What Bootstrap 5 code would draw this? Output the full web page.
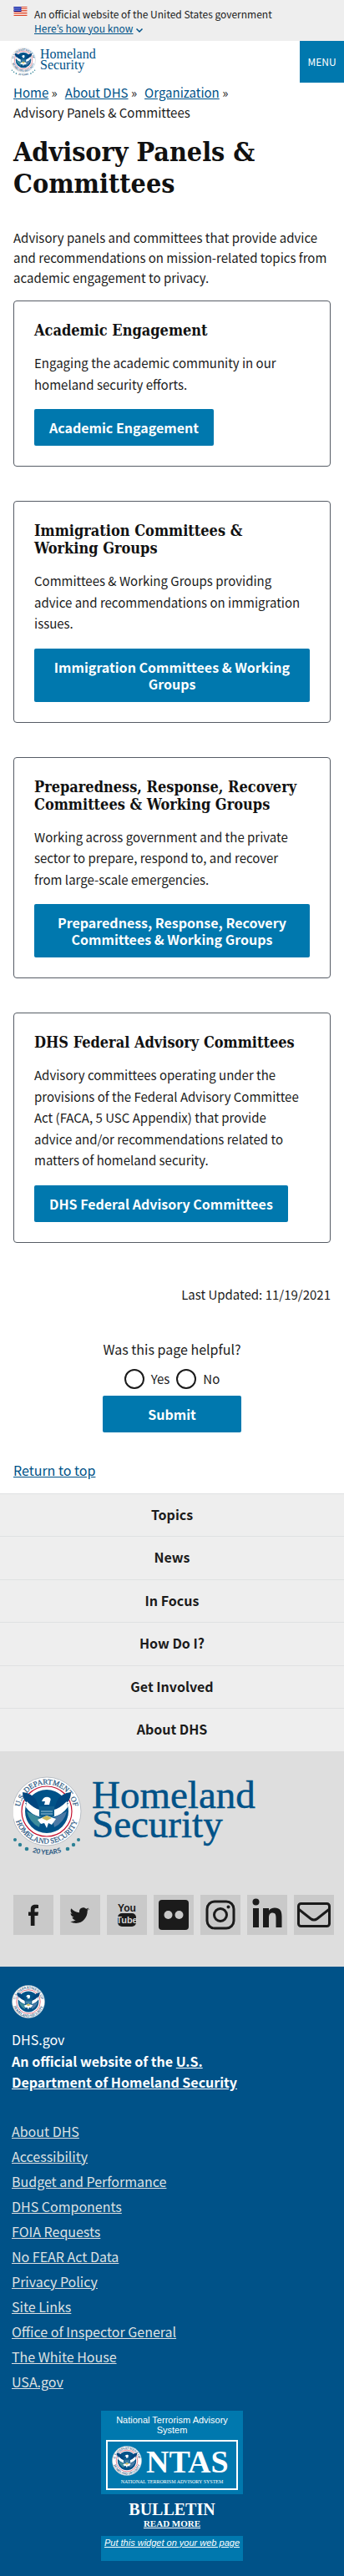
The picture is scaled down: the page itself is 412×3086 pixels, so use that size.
<!DOCTYPE html>
<html lang="en">
<head>
<meta charset="utf-8">
<meta name="viewport" content="width=device-width, initial-scale=1">
<title>Advisory Panels &amp; Committees | Homeland Security</title>
<link href="https://cdn.jsdelivr.net/npm/bootstrap@5.3.0/dist/css/bootstrap.min.css" rel="stylesheet">
<style>
  :root { --dhs-blue: #0078ae; --dhs-navy: #005288; }
  body { font-family: "Noto Sans CJK JP", "Noto Sans", sans-serif; font-size: 15px; line-height: 24px; color: #1b1b1b; }
  a { color: var(--dhs-navy); }
  h1, h2 { font-family: "DejaVu Serif Condensed", "DejaVu Serif", serif; font-weight: 700; color: #111; }
  h1 { font-size: 32px; line-height: 38px; }
  h2 { font-size: 18px; line-height: 21px; }
  .gov-banner { background: #eee; font-size: 12px; line-height: 17px; padding: 8px 16px 7px; }
  .wordmark { font-family: "Liberation Serif", serif; fill: var(--dhs-navy); }
  .menu-btn { background: var(--dhs-blue); color: #fff; width: 53px; height: 50px; border: 0; font-size: 12px; padding: 0; }
  .crumbs { gap: 0 9px; }
  .crumbs li::after { content: " »"; }
  .crumbs li:last-child::after { content: none; }
  .intro { margin: 34px 0 15px; }
  .panel-list { gap: 41px; }
  .panel-card { border: 1px solid #565c65; border-radius: 4px; padding: 24px; }
  .panel-card p { line-height: 1.7; margin-bottom: 17px; padding-right: 8px; }
  .dhs-btn { background: var(--dhs-blue); color: #fff; font-size: 16px; font-weight: 700; line-height: 20px; padding: 12px 18px; border: 0; border-radius: 2px; }
  .dhs-btn:hover { background: var(--dhs-navy); color: #fff; }
  .submit-btn { width: 166px; }
  .updated { margin: 50px 0 41px; }
  .question, .to-top { font-size: 16px; }
  .to-top { margin: 33px 0 16px; }
  .helpful input { appearance: none; width: 24px; height: 24px; border: 2px solid #1b1b1b; border-radius: 50%; margin: 0 8px 0 0; }
  .helpful input:checked { background: var(--dhs-blue); box-shadow: inset 0 0 0 3px #fff; }
  .foot-nav { background: #eee; font-size: 16px; font-weight: 700; line-height: 1.6; }
  .foot-nav a { color: #1b1b1b; border-top: 1px solid #dfe1e2; padding: 12px 0 13px; }
  .foot-brand { background: #dedede; padding: 30px 12px 38px 16px; }
  .social-row { margin-top: 44px; }
  .social { background: #c9c9c9; width: 48px; height: 48px; }
  .social svg { display: block; }
  .foot-id { background: var(--dhs-navy); color: #fff; font-size: 16px; padding: 22px 14px 18px; }
  .foot-id a { color: #fff; }
  .foot-text { max-width: 300px; margin: 13px 0 30px; line-height: 1.6; }
  .foot-id li a { color: #dfe1e2; }
  .foot-id li { line-height: 30px; }
  .ntas { width: 170px; margin-top: 20px; font: 11px/12px "Liberation Sans", Arial, sans-serif; background: var(--dhs-blue); }
  .ntas-head { padding: 5px 6px; }
  .ntas-logo { margin: 1px 6px 0; }
  .ntas-level { background: var(--dhs-navy); margin-top: 5px; height: 50px; padding-top: 8px; font-family: "Liberation Serif", serif; font-weight: 700; }
  .ntas-level a { display: block; text-decoration: none; font-size: 20px; line-height: 20px; }
  .ntas-level .more { font-size: 11px; line-height: 15px; text-decoration: underline; }
  .ntas-foot { height: 30px; padding-top: 2px; font-style: italic; white-space: nowrap; }
</style>
</head>
<body>
<svg width="0" height="0" class="position-absolute" aria-hidden="true">
  <defs>
    <path id="arcTop" d="M-32.500 0A32.500 32.500 0 0 1 32.500 0"/>
    <path id="arcLow" d="M-38 -6A38.500 38.500 0 1 0 38 -6"/>
    <path id="arcYears" d="M-46 24A52 52 0 0 0 46 24"/>
    <symbol id="seal" viewBox="-42 -42 84 84">
      <circle r="41" fill="#fff" stroke="#b9bfc6" stroke-width="1"/>
      <g font-family="Liberation Serif, serif" font-size="9" fill="#27567f" stroke="#27567f" stroke-width=".2" text-anchor="middle">
        <text><textPath href="#arcTop" startOffset="50%">U.S. DEPARTMENT OF</textPath></text>
        <text><textPath href="#arcLow" startOffset="50%">HOMELAND SECURITY</textPath></text>
      </g>
      <circle r="30" fill="#fff" stroke="#c41230" stroke-width="1.200"/>
      <circle r="26" fill="#005288"/>
      <path d="M-29-23Q-17-22-12-12L-7 4Q-20 0-26-10L-24-10Q-29-15-29-23Z" fill="#00467f"/>
      <path d="M29-23Q17-22 12-12L7 4Q20 0 26-10L24-10Q29-15 29-23Z" fill="#00467f"/>
      <path d="M-24-12Q-16-4-9-2L-7 7Q-19 4-25-5Z" fill="#fff"/>
      <path d="M24-12Q16-4 9-2L7 7Q19 4 25-5Z" fill="#fff"/>
      <path d="M-24 0Q-13 5-7 9L-9 19Q-21 13-24 0Z" fill="#3d8c9c"/>
      <path d="M24 0Q13 5 7 9L9 19Q21 13 24 0Z" fill="#4b7aa5"/>
      <path d="M-9-6H9V6Q0 12-9 6Z" fill="#12608f"/>
      <path d="M-7 0H7M-7 3H7" stroke="#9cc3dc" stroke-width="1"/>
      <path d="M-6-12Q-4-18 2-17Q6-16 4-12L3-8H-3L-2-12Z" fill="#fff"/>
      <path d="M-11 10L0 5L11 9L6 16L2 14L0 20L-3 14L-7 15Z" fill="#fff"/>
      <path d="M-6 8L0 5L6 8L0 11Z" fill="#c9b960"/>
    </symbol>
    <symbol id="seal20" viewBox="-42 -42 84 98">
      <use href="#seal" x="-42" y="-42" width="84" height="84"/>
      <g fill="#2b8094">
        <circle cx="-38" cy="34" r="2"/><circle cx="-32" cy="40" r="2.200"/><circle cx="-24" cy="45" r="2.300"/>
        <circle cx="38" cy="34" r="2"/><circle cx="32" cy="40" r="2.200"/><circle cx="25" cy="45" r="2.300"/>
      </g>
      <text font-family="Lato, sans-serif" font-size="8" font-weight="700" fill="#27567f" text-anchor="middle"><textPath href="#arcYears" startOffset="50%">20 YEARS</textPath></text>
    </symbol>
  </defs>
</svg>

<section class="gov-banner d-flex" aria-label="Official website of the United States government">
  <svg class="flex-shrink-0 me-2" width="17" height="11" viewBox="0 0 16 11" aria-hidden="true">
    <path fill="#fff" d="M0 0h16v11H0z"/><path stroke="#db3e1f" d="M0 .5h16M0 2.500h16M0 4.500h16M0 6.500h16M0 8.500h16M0 10.500h16"/>
    <path fill="#1e33b1" d="M0 0h9v6H0z"/><path stroke="#fff" stroke-dasharray="1 1" stroke-width=".6" d="M1 1.500h8M0 3h8M1 4.500h8"/>
  </svg>
  <div>
    <div>An official website of the United States government</div>
    <a href="#">Here’s how you know</a>
    <svg width="10" height="8" viewBox="0 0 10 8" fill="none" stroke="#005288" stroke-width="1.500" aria-hidden="true"><path d="M1.500 2.500L5 6l3.500-3.500"/></svg>
  </div>
</section>

<header class="d-flex justify-content-between align-items-start">
  <a href="#" class="ms-2 mt-1" aria-label="Homeland Security home">
    <svg class="d-block" width="116" height="42" viewBox="0 0 116 42">
      <use href="#seal20" x="5" y="4" width="30" height="35"/>
      <g class="wordmark" font-size="16"><text x="40" y="17">Homeland</text><text x="40" y="30">Security</text></g>
    </svg>
  </a>
  <button class="menu-btn" type="button">MENU</button>
</header>

<main class="px-3">
  <nav aria-label="Breadcrumb">
    <ol class="crumbs list-unstyled d-flex flex-wrap mb-0">
      <li><a href="#">Home</a></li><li><a href="#">About DHS</a></li><li><a href="#">Organization</a></li><li>Advisory Panels &amp; Committees</li>
    </ol>
  </nav>
  <h1 class="mt-3 mb-0">Advisory Panels &amp; Committees</h1>
  <p class="intro">Advisory panels and committees that provide advice and recommendations on mission-related topics from academic engagement to privacy.</p>

  <div class="panel-list d-grid">
    <article class="panel-card">
      <h2 class="mb-3">Academic Engagement</h2>
      <p>Engaging the academic community in our homeland security efforts.</p>
      <a href="#" class="btn dhs-btn">Academic Engagement</a>
    </article>
    <article class="panel-card">
      <h2 class="mb-3">Immigration Committees &amp; Working Groups</h2>
      <p>Committees &amp; Working Groups providing advice and recommendations on immigration issues.</p>
      <a href="#" class="btn dhs-btn">Immigration Committees &amp; Working Groups</a>
    </article>
    <article class="panel-card">
      <h2 class="mb-3">Preparedness, Response, Recovery Committees &amp; Working Groups</h2>
      <p>Working across government and the private sector to prepare, respond to, and recover from large-scale emergencies.</p>
      <a href="#" class="btn dhs-btn">Preparedness, Response, Recovery Committees &amp; Working Groups</a>
    </article>
    <article class="panel-card">
      <h2 class="mb-3">DHS Federal Advisory Committees</h2>
      <p>Advisory committees operating under the provisions of the Federal Advisory Committee Act (FACA, 5 USC Appendix) that provide advice and/or recommendations related to matters of homeland security.</p>
      <a href="#" class="btn dhs-btn">DHS Federal Advisory Committees</a>
    </article>
  </div>

  <p class="updated text-end">Last Updated: 11/19/2021</p>

  <form class="helpful d-flex flex-column align-items-center">
    <div id="helpfulLabel" class="question">Was this page helpful?</div>
    <div class="d-flex gap-2 my-2 pt-1" role="radiogroup" aria-labelledby="helpfulLabel">
      <label class="d-flex"><input type="radio" name="helpful" value="yes">Yes</label>
      <label class="d-flex"><input type="radio" name="helpful" value="no">No</label>
    </div>
    <button class="btn dhs-btn submit-btn" type="submit">Submit</button>
  </form>
  <p class="to-top"><a href="#">Return to top</a></p>
</main>

<footer>
  <nav class="foot-nav text-center" aria-label="Footer">
    <a class="d-block text-decoration-none" href="#">Topics</a>
    <a class="d-block text-decoration-none" href="#">News</a>
    <a class="d-block text-decoration-none" href="#">In Focus</a>
    <a class="d-block text-decoration-none" href="#">How Do I?</a>
    <a class="d-block text-decoration-none" href="#">Get Involved</a>
    <a class="d-block text-decoration-none" href="#">About DHS</a>
  </nav>

  <div class="foot-brand">
    <a href="#" class="d-block" aria-label="Homeland Security">
      <svg class="d-block" width="300" height="98" viewBox="2 0 300 98">
        <use href="#seal20" width="84" height="98"/>
        <g class="wordmark" font-size="47" stroke="#005288" stroke-width=".5"><text x="96" y="38">Homeland</text><text x="96" y="73">Security</text></g>
      </svg>
    </a>
    <div class="social-row d-flex flex-wrap gap-2">
      <a class="social" href="#" aria-label="Facebook"><svg width="48" height="48" viewBox="0 0 48 48"><path fill="#1b1b1b" d="M30 12v4h-2.500c-1.700 0-2 .8-2 2v2.500H30l-.6 4.500h-3.900V37h-4.700V25H18v-4.500h2.800V17c0-3.500 2.200-5.300 5.500-5.300 1.500 0 3 .1 3.700.3z"/></svg></a>
      <a class="social" href="#" aria-label="Twitter"><svg width="48" height="48" viewBox="0 0 48 48"><path fill="#1b1b1b" d="M35 16.500a9 9 0 0 1-2.300 2.400c.3 7-4.800 15-13.600 15-2.500 0-4.900-.7-6.900-2 2.400.3 4.800-.4 6.500-1.800-2 0-3.700-1.400-4.300-3.200.7.100 1.400.1 2-.1-2.300-.5-3.800-2.500-3.800-4.700.7.400 1.400.6 2.100.6-2-1.500-2.700-4.200-1.400-6.400 2.400 3 5.900 4.800 9.800 5-.8-3.600 1.700-6 4.600-6 1.400 0 2.600.6 3.500 1.500 1-.2 2.100-.6 3-1.200-.3 1.100-1 2-2 2.600 1-.1 1.900-.4 2.800-.7z"/></svg></a>
      <a class="social" href="#" aria-label="YouTube"><svg width="48" height="48" viewBox="0 0 48 48" font-family="Liberation Sans Narrow, Liberation Sans, sans-serif" font-weight="700" font-size="12" text-anchor="middle"><rect x="13" y="22" width="22" height="16" rx="5" fill="#1b1b1b"/><text x="24" y="20" fill="#1b1b1b">You</text><text x="24" y="34" fill="#d4d4d4" font-size="11">Tube</text></svg></a>
      <a class="social" href="#" aria-label="Flickr"><svg width="48" height="48" viewBox="0 0 48 48"><rect x="6" y="6" width="36" height="36" rx="4" fill="#1b1b1b"/><circle cx="17.500" cy="24" r="5" fill="#c9c9c9"/><circle cx="30.500" cy="24" r="5" fill="#c9c9c9"/></svg></a>
      <a class="social" href="#" aria-label="Instagram"><svg width="48" height="48" viewBox="0 0 48 48" fill="none" stroke="#1b1b1b" stroke-width="3"><rect x="8" y="8" width="32" height="32" rx="9"/><circle cx="24" cy="24" r="7.500"/><circle cx="33.500" cy="14.500" r="2" fill="#1b1b1b" stroke="none"/></svg></a>
      <a class="social" href="#" aria-label="LinkedIn"><svg width="48" height="48" viewBox="0 0 48 48" fill="#1b1b1b"><circle cx="10.500" cy="8.500" r="4"/><path d="M7 16h7v23H7zM19 16h7v3c1.300-2.200 3.600-3.600 7-3.600 6.500 0 8.500 4 8.500 10.500V39h-7V27.500c0-3.200-.5-6-4-6s-4.500 2.600-4.500 6V39h-7z"/></svg></a>
      <a class="social" href="#" aria-label="Email"><svg width="48" height="48" viewBox="0 0 48 48" fill="none" stroke="#1b1b1b" stroke-width="3"><rect x="5.500" y="10.500" width="37" height="27" rx="3"/><path d="M5.500 17L20 28.500q4 3 8 0L42.500 17"/></svg></a>
    </div>
  </div>

  <div class="foot-id">
    <svg class="d-block" width="40" height="40" viewBox="0 0 84 84" role="img" aria-label="Seal"><use href="#seal" width="84" height="84"/></svg>
    <p class="foot-text">DHS.gov<br><b>An official website of the <a href="#">U.S. Department of Homeland Security</a></b></p>
    <ul class="list-unstyled mb-0">
      <li><a href="#">About DHS</a></li><li><a href="#">Accessibility</a></li><li><a href="#">Budget and Performance</a></li><li><a href="#">DHS Components</a></li><li><a href="#">FOIA Requests</a></li><li><a href="#">No FEAR Act Data</a></li><li><a href="#">Privacy Policy</a></li><li><a href="#">Site Links</a></li><li><a href="#">Office of Inspector General</a></li><li><a href="#">The White House</a></li><li><a href="#">USA.gov</a></li>
    </ul>
    <div class="ntas mx-auto text-center">
      <div class="ntas-head">National Terrorism Advisory System</div>
      <svg class="ntas-logo d-block" width="158" height="60" viewBox="0 0 158 60" fill="#fff" font-family="Liberation Serif, serif">
        <rect x="1" y="1" width="156" height="58" fill="none" stroke="#fff" stroke-width="2"/>
        <use href="#seal" x="7" y="7" width="36" height="36"/>
        <text x="48" y="39" font-size="38" font-weight="700">NTAS</text>
        <text x="79" y="52" font-size="6" text-anchor="middle">NATIONAL TERRORISM ADVISORY SYSTEM</text>
      </svg>
      <div class="ntas-level"><a href="#">BULLETIN</a><a href="#" class="more">READ MORE</a></div>
      <div class="ntas-foot"><a href="#">Put this widget on your web page</a></div>
    </div>
  </div>
</footer>
<script src="https://cdn.jsdelivr.net/npm/bootstrap@5.3.0/dist/js/bootstrap.bundle.min.js"></script>
</body>
</html>
